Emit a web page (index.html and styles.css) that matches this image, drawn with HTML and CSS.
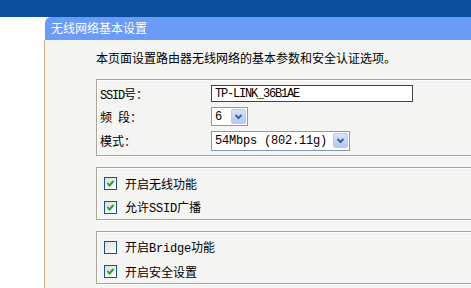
FILE: index.html
```html
<!DOCTYPE html>
<html lang="zh-CN">
<head>
    <meta charset="UTF-8">
    <title>无线网络基本设置</title>
    <link rel="stylesheet" href="styles.css">
</head>
<body>
    <div class="topbar"></div>

    <div class="panel">
        <div class="panel-head">无线网络基本设置</div>
        <div class="panel-body">
            <p class="desc">本页面设置路由器无线网络的基本参数和安全认证选项。</p>

            <div class="group group-form">
                <div class="row row-a">
                    <span class="label"><span class="en en-tight">SSID</span>号：</span>
                    <input type="text" class="text-input" value="TP-LINK_36B1AE">
                </div>
                <div class="row row-b">
                    <span class="label">频<span class="en en-tight"> </span>段：</span>
                    <span class="sel sel-small">
                        <span class="sel-val en">6</span>
                        <span class="sel-btn"><svg width="13" height="13" viewBox="0 0 13 13"><path d="M3.5 5 L6.5 8 L9.5 5" fill="none" stroke="#4a5f8c" stroke-width="2"/></svg></span>
                    </span>
                </div>
                <div class="row row-c">
                    <span class="label">模式：</span>
                    <span class="sel sel-wide">
                        <span class="sel-val en">54Mbps (802.11g)</span>
                        <span class="sel-btn"><svg width="13" height="13" viewBox="0 0 13 13"><path d="M3.5 5 L6.5 8 L9.5 5" fill="none" stroke="#4a5f8c" stroke-width="2"/></svg></span>
                    </span>
                </div>
            </div>

            <div class="group group-check">
                <div class="row check-row">
                    <span class="cb"><svg width="11" height="11" viewBox="0 0 11 11"><path d="M2.5 5 L4.5 7.5 L8.5 3" fill="none" stroke="#21a121" stroke-width="2"/></svg></span>
                    <span>开启无线功能</span>
                </div>
                <div class="row check-row">
                    <span class="cb"><svg width="11" height="11" viewBox="0 0 11 11"><path d="M2.5 5 L4.5 7.5 L8.5 3" fill="none" stroke="#21a121" stroke-width="2"/></svg></span>
                    <span>允许<span class="en">SSID</span>广播</span>
                </div>
            </div>

            <div class="group group-check">
                <div class="row check-row">
                    <span class="cb"></span>
                    <span>开启<span class="en">Bridge</span>功能</span>
                </div>
                <div class="row check-row">
                    <span class="cb"><svg width="11" height="11" viewBox="0 0 11 11"><path d="M2.5 5 L4.5 7.5 L8.5 3" fill="none" stroke="#21a121" stroke-width="2"/></svg></span>
                    <span>开启安全设置</span>
                </div>
            </div>
        </div>
    </div>
</body>
</html>
```

FILE: styles.css
```css
body {
    margin: 0;
    width: 471px;
    height: 288px;
    overflow: hidden;
    background-color: white;
    font-family: "Noto Sans CJK SC", sans-serif;
    font-size: 12px;
    color: #000;
}
.en {
    font-family: "Liberation Mono", monospace;
    font-size: 12px;
    letter-spacing: -0.2px;
}
.en-tight {
    letter-spacing: -1.2px;
}
.topbar {
    height: 17px;
    background-color: #0a4f9e;
}
.panel {
    margin-left: 44px;
}
.panel-head {
    height: 23px;
    line-height: 22px;
    padding-left: 6px;
    margin-left: 1px;
    background-color: #6a9bf6;
    color: white;
    border-top-left-radius: 6px;
}
.panel-body {
    height: 260px;
    border-left: 1px solid #d4b17c;
    background-color: #f4f4f2;
    padding-left: 51px;
}
.desc {
    margin: 0;
    padding-top: 10px;
    height: 16px;
    line-height: 16px;
}
.group {
    border: 1px solid #a6a598;
    border-right: none;
    box-shadow: inset 1px 1px 0 #fff, 0 1px 0 #fff;
}
.group-form {
    margin-top: 13px;
    padding: 2px 0 2px 3px;
}
.group-check {
    margin-top: 11px;
    padding: 3px 0 0 7px;
}
.row {
    display: flex;
    align-items: center;
}
.row-a { height: 23px; }
.row-b { height: 23px; }
.row-c { height: 25px; }
.check-row { height: 24px; }
.label {
    width: 111px;
}
.text-input {
    box-sizing: border-box;
    width: 202px;
    height: 17px;
    margin: 0;
    padding: 0 3px;
    border: 1px solid #3c4250;
    background-color: white;
    font-family: "Liberation Mono", monospace;
    font-size: 12px;
    letter-spacing: -1.2px;
    color: #000;
}
.sel {
    box-sizing: border-box;
    display: inline-flex;
    align-items: center;
    justify-content: space-between;
    height: 19px;
    padding: 1px 1px 1px 3px;
    border: 1px solid #7f9db9;
    background-color: white;
}
.sel-small { width: 37px; }
.sel-wide { width: 139px; height: 20px; }
.sel-btn {
    box-sizing: border-box;
    display: flex;
    align-items: center;
    justify-content: center;
    width: 15px;
    height: 15px;
    border: 1px solid #bacbf2;
    border-radius: 2px;
    background: linear-gradient(#d6e2fd, #b4c8f6);
}
.cb {
    box-sizing: border-box;
    display: inline-flex;
    align-items: center;
    justify-content: center;
    width: 13px;
    height: 13px;
    margin-right: 8px;
    border: 1px solid #1c5180;
    background: linear-gradient(135deg, #dcdcd6, #fff);
}
```
